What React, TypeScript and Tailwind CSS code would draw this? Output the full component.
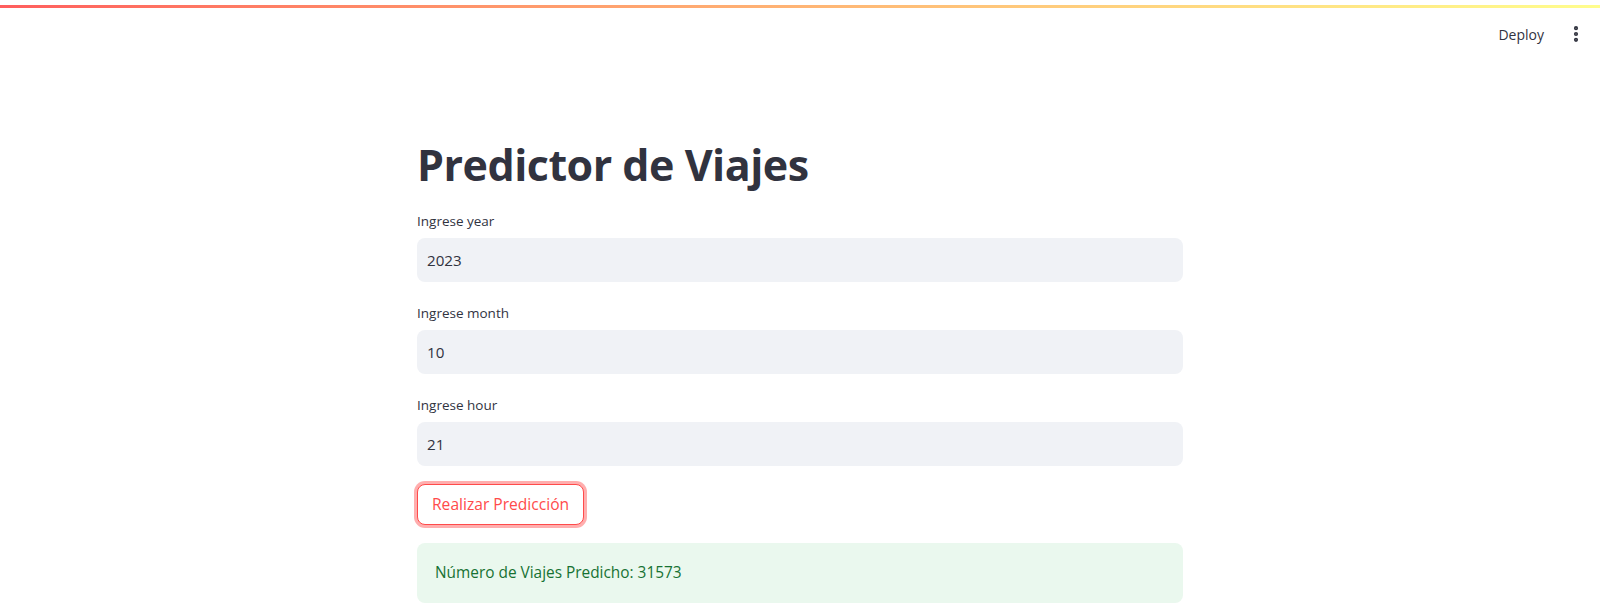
import { EllipsisVertical } from "lucide-react";

const font = "font-['Open_Sans',sans-serif]";

function Field({ label, value }: { label: string; value: string }) {
  return (
    <div className="flex flex-col gap-[6px]">
      <label className="text-[13.5px] leading-[21px] text-[#31333f]">{label}</label>
      <div className="flex h-[44px] items-center rounded-[8px] bg-[#f0f2f6] px-[10px] text-[15.2px] text-[#31333f]">
        {value}
      </div>
    </div>
  );
}

export default function App() {
  return (
    <div className={`${font} min-h-[616px] bg-white text-[#31333f]`}>
      <header className="relative flex h-[64px] items-center justify-end gap-[22px] pr-[14px] pt-[4px]">
        <div className="absolute left-0 right-0 top-[5px] h-[3px] bg-gradient-to-r from-[#ff4b4b] to-[#fffd80] opacity-90" />
        <button className="text-[14px] text-[#31333f]">Deploy</button>
        <EllipsisVertical className="h-[20px] w-[20px] text-[#31333f]" strokeWidth={3} />
      </header>
      <main className="mx-auto flex w-[766px] flex-col pt-[70px]">
        <h1 className="mb-[15px] text-[43px] font-bold leading-[62px] tracking-[-0.5px] text-[#31333f]">
          Predictor de Viajes
        </h1>
        <div className="flex flex-col gap-[21px]">
          <Field label="Ingrese year" value="2023" />
          <Field label="Ingrese month" value="10" />
          <Field label="Ingrese hour" value="21" />
        </div>
        <div className="mt-[18px]">
          <button className="h-[41px] rounded-[8px] border border-[#ff4b4b] bg-white px-[14px] text-[15.6px] text-[#ff4b4b] shadow-[0_0_0_3px_rgba(255,75,75,0.45)]">
            Realizar Predicción
          </button>
        </div>
        <div className="mt-[18px] flex h-[60px] items-center rounded-[8px] bg-[#eaf8ee] px-[18px] text-[15.4px] text-[#177233]">
          Número de Viajes Predicho: 31573
        </div>
      </main>
    </div>
  );
}
